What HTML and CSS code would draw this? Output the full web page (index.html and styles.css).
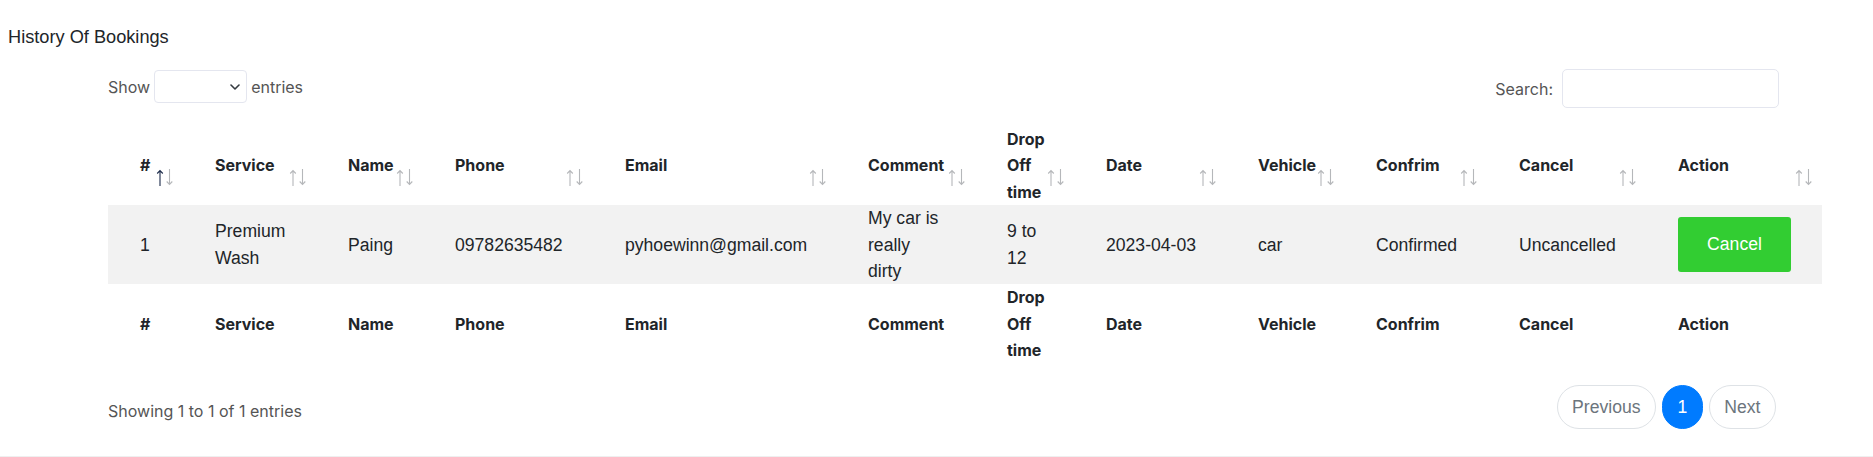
FILE: index.html
```html
<!DOCTYPE html>
<html lang="en">
<head>
<meta charset="utf-8">
<title>History Of Bookings</title>
<link rel="stylesheet" href="styles.css">
</head>
<body>
<div class="page">
  <h2 class="title">History Of Bookings</h2>
  <div class="dt-wrapper">
    <div class="dt-controls">
      <label class="dt-length"><span>Show</span><span class="select-wrap"><select class="dt-select"><option></option></select><svg class="chev" width="10" height="6" viewBox="0 0 10 6"><path d="M1 1l4 4 4-4" fill="none" stroke="#343a40" stroke-width="1.6" stroke-linecap="round" stroke-linejoin="round"/></svg></span><span>entries</span></label>
      <label class="dt-search"><span>Search:</span><input type="search" class="dt-input"></label>
    </div>
    <table class="dt">
      <colgroup>
        <col class="c-num"><col class="c-service"><col class="c-name"><col class="c-phone"><col class="c-email"><col class="c-comment"><col class="c-drop"><col class="c-date"><col class="c-vehicle"><col class="c-confirm"><col class="c-cancel"><col class="c-action">
      </colgroup>
      <thead>
        <tr>
          <th class="sorting sorting-asc">#<svg class="sort-ic" width="17" height="17" viewBox="0 0 17 17"><path class="up" d="M4 1.5V17M1.2 4.5L4 1.5 6.8 4.5"/><path class="dn" d="M13.5 0V15.5M10.7 12.5L13.5 15.5 16.3 12.5"/></svg></th>
          <th class="sorting">Service<svg class="sort-ic" width="17" height="17" viewBox="0 0 17 17"><path class="up" d="M4 1.5V17M1.2 4.5L4 1.5 6.8 4.5"/><path class="dn" d="M13.5 0V15.5M10.7 12.5L13.5 15.5 16.3 12.5"/></svg></th>
          <th class="sorting">Name<svg class="sort-ic" width="17" height="17" viewBox="0 0 17 17"><path class="up" d="M4 1.5V17M1.2 4.5L4 1.5 6.8 4.5"/><path class="dn" d="M13.5 0V15.5M10.7 12.5L13.5 15.5 16.3 12.5"/></svg></th>
          <th class="sorting">Phone<svg class="sort-ic" width="17" height="17" viewBox="0 0 17 17"><path class="up" d="M4 1.5V17M1.2 4.5L4 1.5 6.8 4.5"/><path class="dn" d="M13.5 0V15.5M10.7 12.5L13.5 15.5 16.3 12.5"/></svg></th>
          <th class="sorting">Email<svg class="sort-ic" width="17" height="17" viewBox="0 0 17 17"><path class="up" d="M4 1.5V17M1.2 4.5L4 1.5 6.8 4.5"/><path class="dn" d="M13.5 0V15.5M10.7 12.5L13.5 15.5 16.3 12.5"/></svg></th>
          <th class="sorting">Comment<svg class="sort-ic" width="17" height="17" viewBox="0 0 17 17"><path class="up" d="M4 1.5V17M1.2 4.5L4 1.5 6.8 4.5"/><path class="dn" d="M13.5 0V15.5M10.7 12.5L13.5 15.5 16.3 12.5"/></svg></th>
          <th class="sorting">Drop Off time<svg class="sort-ic" width="17" height="17" viewBox="0 0 17 17"><path class="up" d="M4 1.5V17M1.2 4.5L4 1.5 6.8 4.5"/><path class="dn" d="M13.5 0V15.5M10.7 12.5L13.5 15.5 16.3 12.5"/></svg></th>
          <th class="sorting">Date<svg class="sort-ic" width="17" height="17" viewBox="0 0 17 17"><path class="up" d="M4 1.5V17M1.2 4.5L4 1.5 6.8 4.5"/><path class="dn" d="M13.5 0V15.5M10.7 12.5L13.5 15.5 16.3 12.5"/></svg></th>
          <th class="sorting">Vehicle<svg class="sort-ic" width="17" height="17" viewBox="0 0 17 17"><path class="up" d="M4 1.5V17M1.2 4.5L4 1.5 6.8 4.5"/><path class="dn" d="M13.5 0V15.5M10.7 12.5L13.5 15.5 16.3 12.5"/></svg></th>
          <th class="sorting">Confrim<svg class="sort-ic" width="17" height="17" viewBox="0 0 17 17"><path class="up" d="M4 1.5V17M1.2 4.5L4 1.5 6.8 4.5"/><path class="dn" d="M13.5 0V15.5M10.7 12.5L13.5 15.5 16.3 12.5"/></svg></th>
          <th class="sorting">Cancel<svg class="sort-ic" width="17" height="17" viewBox="0 0 17 17"><path class="up" d="M4 1.5V17M1.2 4.5L4 1.5 6.8 4.5"/><path class="dn" d="M13.5 0V15.5M10.7 12.5L13.5 15.5 16.3 12.5"/></svg></th>
          <th class="sorting">Action<svg class="sort-ic" width="17" height="17" viewBox="0 0 17 17"><path class="up" d="M4 1.5V17M1.2 4.5L4 1.5 6.8 4.5"/><path class="dn" d="M13.5 0V15.5M10.7 12.5L13.5 15.5 16.3 12.5"/></svg></th>
        </tr>
      </thead>
      <tbody>
        <tr class="odd">
          <td>1</td>
          <td>Premium Wash</td>
          <td>Paing</td>
          <td>09782635482</td>
          <td>pyhoewinn@gmail.com</td>
          <td>My car is really dirty</td>
          <td>9 to 12</td>
          <td>2023-04-03</td>
          <td>car</td>
          <td>Confirmed</td>
          <td>Uncancelled</td>
          <td><button class="btn-cancel" type="button">Cancel</button></td>
        </tr>
      </tbody>
      <tfoot>
        <tr>
          <th>#</th>
          <th>Service</th>
          <th>Name</th>
          <th>Phone</th>
          <th>Email</th>
          <th>Comment</th>
          <th>Drop Off time</th>
          <th>Date</th>
          <th>Vehicle</th>
          <th>Confrim</th>
          <th>Cancel</th>
          <th>Action</th>
        </tr>
      </tfoot>
    </table>
    <div class="dt-bottom">
      <div class="dt-info">Showing 1 to 1 of 1 entries</div>
      <ul class="pagination">
        <li><a class="page-link">Previous</a></li>
        <li><a class="page-link active">1</a></li>
        <li><a class="page-link">Next</a></li>
      </ul>
    </div>
  </div>
</div>
<div class="bottom-rule"></div>
</body>
</html>
```
FILE: styles.css
```css
html, body {
  margin: 0;
  padding: 0;
  background: #fff;
}

body {
  font-family: "Liberation Sans", Arial, sans-serif;
  color: #212529;
}

.page {
  padding: 26px 8px 0 8px;
}

.title {
  margin: 0;
  font-family: "Liberation Sans", Arial, sans-serif;
  font-size: 18.2px;
  font-weight: normal;
  line-height: 22px;
  color: #212529;
}

.dt-wrapper {
  margin-left: 100px;
  width: 1671px;
}

.dt-controls {
  margin-top: 21px;
  height: 39px;
  display: flex;
  justify-content: space-between;
  align-items: flex-start;
}

.dt-length,
.dt-search {
  display: flex;
  align-items: center;
  font-family: Inter, "Noto Sans", sans-serif;
  font-size: 16px;
  color: #555;
}

.dt-length {
  height: 33px;
  gap: 4px;
  padding-top: 1px;
}

.dt-search {
  height: 39px;
  gap: 9px;
}

.select-wrap {
  position: relative;
  display: block;
  width: 93px;
  height: 33px;
}

.dt-select {
  appearance: none;
  -webkit-appearance: none;
  width: 93px;
  height: 33px;
  box-sizing: border-box;
  border: 1px solid #e4e6ef;
  border-radius: 4px;
  background: #fff;
  margin: 0;
  padding: 0 8px;
  font-family: Inter, sans-serif;
  font-size: 15px;
}

.chev {
  position: absolute;
  right: 7px;
  top: 14px;
  pointer-events: none;
}

.dt-input {
  width: 217px;
  height: 39px;
  box-sizing: border-box;
  border: 1px solid #e4e6ef;
  border-radius: 5px;
  margin: 0;
  padding: 0 10px;
  background: #fff;
}

.dt {
  margin-top: 18px;
  width: 1714px;
  table-layout: fixed;
  border-collapse: collapse;
}

.c-num { width: 75px; }
.c-service { width: 133px; }
.c-name { width: 107px; }
.c-phone { width: 170px; }
.c-email { width: 243px; }
.c-comment { width: 139px; }
.c-drop { width: 99px; }
.c-date { width: 152px; }
.c-vehicle { width: 118px; }
.c-confirm { width: 143px; }
.c-cancel { width: 159px; }
.c-action { width: 176px; }

.dt th,
.dt td {
  padding: 0 30px 0 32px;
  text-align: left;
  vertical-align: middle;
  line-height: 26.4px;
}

.dt th {
  font-family: Inter, "Noto Sans", sans-serif;
  font-weight: 700;
  font-size: 16px;
  color: #212529;
}

.dt td {
  font-family: "Liberation Sans", Arial, sans-serif;
  font-size: 17.6px;
  color: #212529;
}

.dt tbody tr.odd {
  background: #f2f2f2;
}

.dt thead th.sorting {
  position: relative;
}

.sort-ic {
  position: absolute;
  right: 10px;
  bottom: 19px;
  fill: none;
  stroke-width: 1.1;
  stroke-linecap: butt;
}

.sort-ic .up,
.sort-ic .dn {
  stroke: #b5b7ba;
}

.sorting-asc .sort-ic .up {
  stroke: #1c2b4a;
}

.btn-cancel {
  display: block;
  width: 113px;
  height: 55px;
  margin: 0;
  padding: 0;
  border: none;
  border-radius: 3px;
  background: #32cd32;
  color: #fff;
  font-family: "Liberation Sans", Arial, sans-serif;
  font-size: 17.6px;
}

.dt-bottom {
  margin-top: 21px;
  display: flex;
  justify-content: space-between;
  align-items: flex-start;
}

.dt-info {
  padding-top: 14px;
  font-family: Inter, "Noto Sans", sans-serif;
  font-size: 16px;
  line-height: 24px;
  color: #555;
}

.pagination {
  list-style: none;
  margin: 0 3px 0 0;
  padding: 0;
  display: flex;
  gap: 6px;
}

.page-link {
  display: block;
  box-sizing: border-box;
  height: 44px;
  padding: 0 14.5px;
  border: 1px solid #dee2e6;
  border-radius: 22px;
  font-family: "Liberation Sans", Arial, sans-serif;
  font-size: 17.6px;
  line-height: 42px;
  color: #6c757d;
  background: #fff;
}

.page-link.active {
  background: #007bff;
  border-color: #007bff;
  color: #fff;
}

.bottom-rule {
  margin-top: 27px;
  height: 2px;
  background: #efefef;
}
```
